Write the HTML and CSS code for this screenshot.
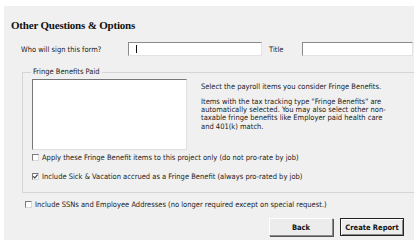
FILE: index.html
```html
<!DOCTYPE html>
<html>
<head>
<meta charset="utf-8">
<link rel="stylesheet" href="styles.css">
</head>
<body>
<div class="panel">
  <h1 class="title">Other Questions &amp; Options</h1>
  <div class="sign-row">
    <span class="label">Who will sign this form?</span>
    <div class="input wide"><span class="caret"></span></div>
    <span class="label title-label">Title</span>
    <div class="input narrow"></div>
  </div>
  <fieldset class="group">
    <legend>Fringe Benefits Paid</legend>
    <div class="group-top">
      <div class="listbox"></div>
      <div class="desc">
        <p>Select the payroll items you consider Fringe Benefits.</p>
        <p>Items with the tax tracking type "Fringe Benefits" are automatically selected. You may also select other non-taxable fringe benefits like Employer paid health care and 401(k) match.</p>
      </div>
    </div>
    <label class="check first"><span class="box"></span>Apply these Fringe Benefit items to this project only (do not pro-rate by job)</label>
    <label class="check second"><span class="box"><svg width="7" height="7" viewBox="0 0 7 7"><path d="M1.2 3.4 L2.8 5 L5.6 1.6" fill="none" stroke="#333" stroke-width="1.1"/></svg></span>Include Sick &amp; Vacation accrued as a Fringe Benefit (always pro-rated by job)</label>
  </fieldset>
  <label class="check outer"><span class="box"></span>Include SSNs and Employee Addresses (no longer required except on special request.)</label>
  <div class="buttons">
    <button class="btn">Back</button>
    <button class="btn default">Create Report</button>
  </div>
</div>
</body>
</html>
```
FILE: styles.css
```css
html, body {
  margin: 0;
  padding: 0;
  background: #ffffff;
}
body {
  width: 418px;
  height: 242px;
  overflow: hidden;
  font-family: "DejaVu Sans Condensed", "DejaVu Sans", sans-serif;
  font-size: 7.5px;
  color: #222;
}
.panel {
  margin: 6px 4px 0 4px;
  height: 234px;
  background: #f0f0f0;
  padding: 0 0 0 7px;
  box-sizing: border-box;
  display: flex;
  flex-direction: column;
}
.title {
  margin: 13px 0 0 0;
  font-family: "Liberation Serif", serif;
  font-weight: bold;
  font-size: 11px;
  letter-spacing: -0.2px;
  line-height: 12px;
  height: 12px;
  color: #111;
}
.sign-row {
  display: flex;
  align-items: center;
  margin-top: 11px;
  height: 14px;
}
.label {
  margin-left: 10px;
  width: 107px;
}
.title-label {
  margin-left: 7px;
  width: 33px;
}
.input {
  height: 14px;
  box-sizing: border-box;
  background: #fff;
  border-top: 1px solid #8a8a8a;
  border-left: 1px solid #8a8a8a;
  border-right: 1px solid #e3e3e3;
  border-bottom: 1px solid #e3e3e3;
  display: flex;
  align-items: center;
}
.input.wide { width: 134px; }
.input.narrow { width: 111px; }
.caret {
  display: block;
  width: 1px;
  height: 8px;
  background: #111;
  margin-left: 7px;
}
.group {
  margin: 12px 0 0 11px;
  padding: 3px 0 0 9px;
  border: 1px solid #d5d5d5;
  border-right: none;
  height: 125px;
  box-sizing: border-box;
}
.group legend {
  padding: 0 2px;
  margin-left: -1px;
  line-height: 8px;
}
.group-top {
  display: flex;
}
.listbox {
  width: 155px;
  height: 71px;
  flex: none;
  box-sizing: border-box;
  background: #fff;
  border-top: 1px solid #777;
  border-left: 1px solid #777;
  border-right: 1px solid #e0e0e0;
  border-bottom: 1px solid #e0e0e0;
}
.desc {
  margin-left: 14px;
  width: 192px;
  line-height: 8.2px;
  padding-top: 4px;
}
.desc p {
  margin: 0 0 6.8px 0;
}
.check {
  display: flex;
  align-items: center;
  height: 8px;
  white-space: nowrap;
}
.check.first { margin-top: 3px; }
.check.second { margin-top: 11px; }
.box {
  width: 7px;
  height: 7px;
  flex: none;
  box-sizing: border-box;
  border-top: 1px solid #7a7a7a;
  border-left: 1px solid #7a7a7a;
  border-right: 1px solid #d8d8d8;
  border-bottom: 1px solid #d8d8d8;
  background: #fff;
  margin-right: 3px;
  display: flex;
  align-items: center;
  justify-content: center;
}
.box svg { display: block; flex: none; }
.outer {
  margin-top: 7px;
  margin-left: 14px;
}
.buttons {
  display: flex;
  justify-content: flex-end;
  gap: 7px;
  margin-top: 10px;
  padding-right: 10px;
}
.btn {
  height: 18px;
  width: 64px;
  padding: 0;
  font-family: "DejaVu Sans Condensed", "DejaVu Sans", sans-serif;
  font-weight: bold;
  font-size: 7.5px;
  color: #111;
  background: #ececec;
  border-top: 1px solid #fff;
  border-left: 1px solid #fff;
  border-right: 1px solid #8a8a8a;
  border-bottom: 1px solid #8a8a8a;
  box-shadow: 1px 1px 0 #555;
}
.btn.default {
  border: 1px solid #222;
  box-shadow: inset 1px 1px 0 #fff, inset -1px -1px 0 #8a8a8a;
}
```
